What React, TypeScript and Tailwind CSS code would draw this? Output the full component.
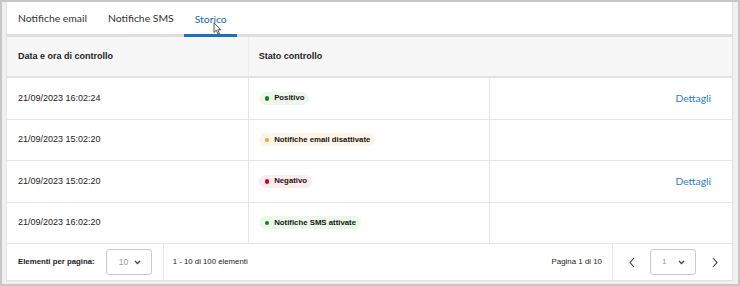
import React from "react";

type Badge = { label: string; tone: "green" | "orange" | "red" };

const rows: { date: string; badge: Badge; link: boolean }[] = [
  { date: "21/09/2023 16:02:24", badge: { label: "Positivo", tone: "green" }, link: true },
  { date: "21/09/2023 15:02:20", badge: { label: "Notifiche email disattivate", tone: "orange" }, link: false },
  { date: "21/09/2023 15:02:20", badge: { label: "Negativo", tone: "red" }, link: true },
  { date: "21/09/2023 16:02:20", badge: { label: "Notifiche SMS attivate", tone: "green" }, link: false },
];

function Pill({ badge }: { badge: Badge }) {
  const bg =
    badge.tone === "green" ? "bg-[#ebf8ea]" : badge.tone === "orange" ? "bg-[#fff4e8]" : "bg-[#fdecee]";
  const dot =
    badge.tone === "green" ? "bg-[#1e7d1e]" : badge.tone === "orange" ? "bg-[#f5a524]" : "bg-[#d0021b]";
  return (
    <span className={`inline-flex h-[13px] items-center gap-[5px] rounded-full pl-[6px] pr-[5px] ${bg}`}>
      <span className={`h-[4.5px] w-[4.5px] rounded-full ${dot}`} />
      <span className="text-[7.8px] font-bold leading-none text-[#151515]">{badge.label}</span>
    </span>
  );
}

function Chevron() {
  return (
    <svg width="7" height="5" viewBox="0 0 7 5" className="block">
      <polyline points="1,1 3.5,3.5 6,1" fill="none" stroke="#4a4a4a" strokeWidth="1.4" />
    </svg>
  );
}

export default function App() {
  return (
    <div
      className="h-[286px] w-[740px] border-2 border-[#c6c6c6] bg-[#f0f0f0] pb-[3px] pl-[4px] pr-[5px]"
      style={{ fontFamily: '"Liberation Sans", Arial, sans-serif' }}
    >
      <div className="relative flex h-full flex-col border-x border-b border-[#e2e2e2] bg-white">
        {/* Tabs */}
        <div className="flex h-[35px] items-end border-b-[3px] border-[#dedede]" style={{ fontFamily: "Lato, sans-serif" }}>
          <div className="flex h-full items-center pl-[11px] pr-[11px] pt-[1px] text-[10.4px] text-[#333]">Notifiche email</div>
          <div className="flex h-full items-center px-[10px] pt-[1px] text-[10.4px] text-[#333]">Notifiche SMS</div>
          <div className="-mb-[3px] flex h-[35px] items-center border-b-[3px] border-[#1f6fbf] pl-[11px] pr-[10px] pt-[4px] text-[10.4px] text-[#1667b8]">
            Storico
          </div>
        </div>
        {/* cursor */}
        <svg className="absolute left-[206px] top-[20px]" width="9" height="13" viewBox="0 0 10 15">
          <path d="M1 1 L1 12 L3.6 9.6 L5.6 14 L7.2 13.3 L5.3 9 L8.8 9 Z" fill="#fff" stroke="#222" strokeWidth="0.9" strokeLinejoin="round" />
        </svg>

        {/* Header */}
        <div className="grid h-[41px] grid-cols-3 border-b-2 border-[#e2e2e2] bg-[#f7f7f7]">
          <div className="flex items-center border-r border-[#ececec] pl-[11px] pt-[1px] text-[9px] font-bold text-[#222]">
            Data e ora di controllo
          </div>
          <div className="col-span-2 flex items-center pl-[10px] pt-[1px] text-[9px] font-bold text-[#222]">Stato controllo</div>
        </div>

        {/* Rows */}
        {rows.map((r, i) => (
          <div key={i} className="grid h-[41.5px] grid-cols-3 border-b border-[#e6e6e6]">
            <div className="flex items-center border-r border-[#e6e6e6] pl-[11px] text-[9px] text-[#222]">{r.date}</div>
            <div className="flex items-center border-r border-[#e6e6e6] pl-[10px]">
              <Pill badge={r.badge} />
            </div>
            <div className="flex items-center justify-end pr-[21px]">
              {r.link && (
                <span className="text-[10.3px] text-[#2a7ccf]" style={{ fontFamily: "Lato, sans-serif" }}>
                  Dettagli
                </span>
              )}
            </div>
          </div>
        ))}

        {/* Footer */}
        <div className="flex flex-1 items-stretch">
          <div className="flex items-center border-r border-[#e6e6e6] pl-[11px] pr-[11px]">
            <span className="text-[7.8px] font-bold text-[#222]">Elementi per pagina:</span>
            <div className="ml-[11px] flex h-[26px] w-[46px] items-center justify-between rounded-[3px] border border-[#c8c8c8] pl-[12px] pr-[10px]">
              <span className="text-[8.5px] text-[#9a9a9a]">10</span>
              <Chevron />
            </div>
          </div>
          <div className="flex flex-1 items-center pl-[9px] text-[7.8px] text-[#222]">1 - 10 di 100 elementi</div>
          <div className="flex items-center border-r border-[#e6e6e6] pr-[10px] text-[7.9px] text-[#222]">Pagina 1 di 10</div>
          <div className="flex items-center pl-[15px] pr-[13px]">
            <svg width="8" height="11" viewBox="0 0 8 11" className="block">
              <polyline points="6,1 2,5.5 6,10" fill="none" stroke="#333" strokeWidth="1.1" />
            </svg>
            <div className="ml-[14px] flex h-[26px] w-[46px] items-center justify-between rounded-[3px] border border-[#c8c8c8] pl-[11px] pr-[10px]">
              <span className="text-[8px] text-[#9a9a9a]">1</span>
              <Chevron />
            </div>
            <svg className="ml-[15px] block" width="8" height="11" viewBox="0 0 8 11">
              <polyline points="2,1 6,5.5 2,10" fill="none" stroke="#333" strokeWidth="1.1" />
            </svg>
          </div>
        </div>
      </div>
    </div>
  );
}
